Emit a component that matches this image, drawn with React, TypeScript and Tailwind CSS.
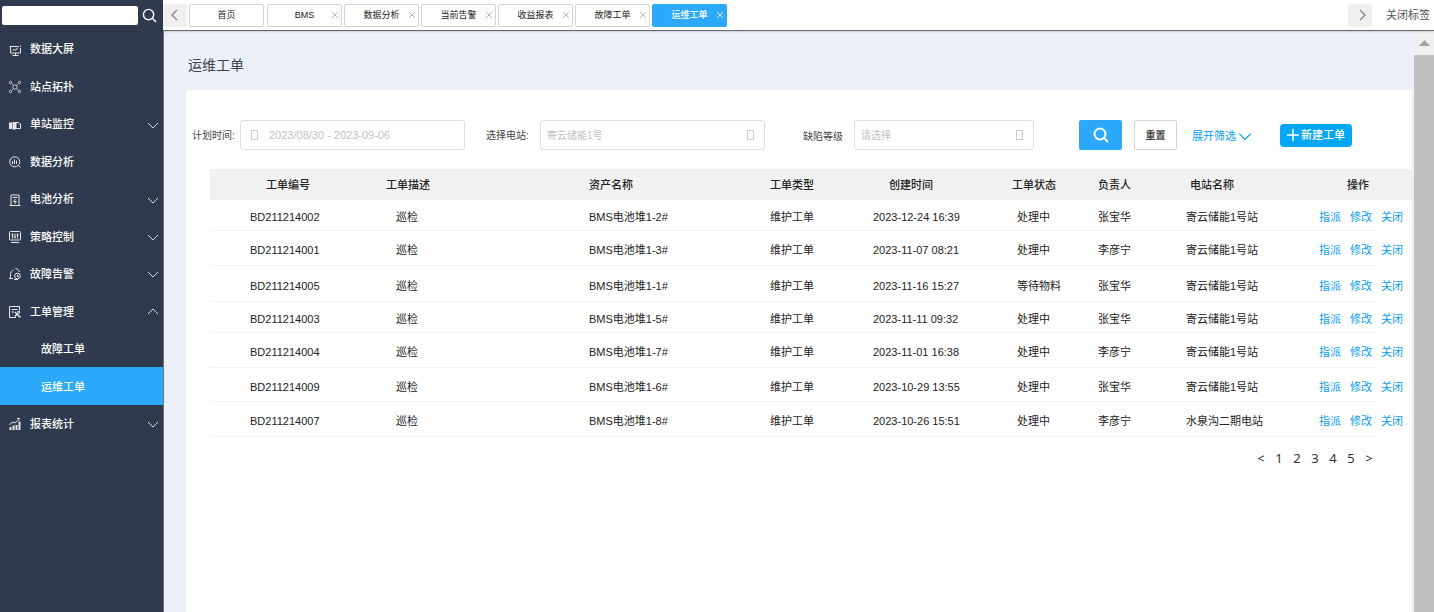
import { useState } from 'react';
import type { ReactNode } from 'react';
import clsx from 'clsx';

interface MenuItem {
  label: string;
  icon?: ReactNode;
  arrow?: 'up' | 'down';
  child?: boolean;
}

const menu: MenuItem[] = [
  {
    label: '数据大屏',
    icon: (
      <>
        <path d="M.5 2.500h9M11.500 4v5h-10v-6M11.500 1.500v1.500" />
        <path d="M3.500 11.500h6M6.500 9v2.500M3.500 7l2-2 1 1.500 2.500-3" />
      </>
    ),
  },
  {
    label: '站点拓扑',
    icon: (
      <g strokeWidth=".8">
        <circle cx="6" cy="6" r="2.200" />
        <circle cx="1.500" cy="1.500" r="1.200" />
        <circle cx="10.500" cy="1.500" r="1.200" />
        <circle cx="1.500" cy="10.500" r="1.200" />
        <circle cx="10.500" cy="10.500" r="1.200" />
        <path d="M2.500 2.500l2 2M9.500 2.500l-2 2M2.500 9.500l2-2M9.500 9.500l-2-2" />
      </g>
    ),
  },
  {
    label: '单站监控',
    arrow: 'down',
    icon: (
      <>
        <path d="M0 3.500h3v6.500H0zM3.500 3h3.500v7.500H3.500z" fill="currentColor" stroke="none" />
        <path d="M7 3.500h2.500l1 1.500h1v4.500H7z" />
      </>
    ),
  },
  {
    label: '数据分析',
    icon: (
      <>
        <circle cx="5.800" cy="5.800" r="5" />
        <path d="M3.500 5v3M5.500 3.500V8M7.500 4.500V8M9.500 9.500l2 2" />
      </>
    ),
  },
  {
    label: '电池分析',
    arrow: 'down',
    icon: (
      <>
        <path d="M2 11V1h8v10M.5 11.500h11M3.500 3.500h5" />
        <path d="M6.500 5L4.500 7.500h3L5.500 10" />
      </>
    ),
  },
  {
    label: '策略控制',
    arrow: 'down',
    icon: (
      <>
        <rect x=".5" y=".5" width="11" height="8.500" rx="1" />
        <path d="M3.500 2.500v5M6 2.500v5M8.500 2.500v5M2.500 4h2M5 6h2M7.500 4h2M2 11.500h8" />
      </>
    ),
  },
  {
    label: '故障告警',
    arrow: 'down',
    icon: (
      <>
        <path d="M0 10.500h4M1.500 10V6.500C1.500 4 3 2.500 4.500 2M6.500 .5c2 .5 3.500 1.500 4 3.500" />
        <circle cx="8.500" cy="8" r="2.800" />
        <path d="M8.500 6.500v2H10M5 11.500h4" />
      </>
    ),
  },
  {
    label: '工单管理',
    arrow: 'up',
    icon: (
      <>
        <path d="M5 11.500H.5V.5h10v4M2.500 3.500h6M2.500 6h2.500" />
        <path d="M6 6l5.500 5.500M6 10.500l3.500-4" strokeWidth="1.500" />
        <path d="M5 11.500h2M8.500 5.500h2v2" />
      </>
    ),
  },
  { label: '故障工单', child: true },
  { label: '运维工单', child: true },
  {
    label: '报表统计',
    arrow: 'down',
    icon: (
      <>
        <path d="M1.500 12V9M4.500 12V7.500M7.500 12V7M10.500 12V3.500" strokeWidth="2" />
        <path d="M.5 6.500L4 4l2 1 4.500-4M8 .5h3" />
      </>
    ),
  },
];

const tabs = ['首页', 'BMS', '数据分析', '当前告警', '收益报表', '故障工单', '运维工单'];

const orders = [
  { id: 'BD211214002', asset: 'BMS电池堆1-2#', time: '2023-12-24 16:39', status: '处理中', owner: '张宝华', station: '寄云储能1号站', height: 'h-[31px]' },
  { id: 'BD211214001', asset: 'BMS电池堆1-3#', time: '2023-11-07 08:21', status: '处理中', owner: '李彦宁', station: '寄云储能1号站', height: 'h-[35px]' },
  { id: 'BD211214005', asset: 'BMS电池堆1-1#', time: '2023-11-16 15:27', status: '等待物料', owner: '张宝华', station: '寄云储能1号站', height: 'h-[36px]' },
  { id: 'BD211214003', asset: 'BMS电池堆1-5#', time: '2023-11-11 09:32', status: '处理中', owner: '张宝华', station: '寄云储能1号站', height: 'h-[31px]' },
  { id: 'BD211214004', asset: 'BMS电池堆1-7#', time: '2023-11-01 16:38', status: '处理中', owner: '李彦宁', station: '寄云储能1号站', height: 'h-[35px]' },
  { id: 'BD211214009', asset: 'BMS电池堆1-6#', time: '2023-10-29 13:55', status: '处理中', owner: '张宝华', station: '寄云储能1号站', height: 'h-[34px]' },
  { id: 'BD211214007', asset: 'BMS电池堆1-8#', time: '2023-10-26 15:51', status: '处理中', owner: '李彦宁', station: '水泉沟二期电站', height: 'h-[35px]' },
];

const columns = [
  { title: '工单编号', className: 'w-[176px] pl-14' },
  { title: '工单描述', className: 'w-[203px]' },
  { title: '资产名称', className: 'w-[181px]' },
  { title: '工单类型', className: 'w-[103px]' },
  { title: '创建时间', className: 'w-[139px] pl-4' },
  { title: '工单状态', className: 'w-[86px]' },
  { title: '负责人', className: 'w-[88px]' },
  { title: '电站名称', className: 'w-[133px] pl-1' },
  { title: '操作', className: 'w-[93px] pl-7' },
];

interface ChevronProps {
  dir: 'up' | 'down' | 'left' | 'right';
  className?: string;
  strokeWidth?: number;
}

function Chevron({ dir, className, strokeWidth = 1 }: ChevronProps) {
  const d = {
    up: 'M1 8l5-5 5 5',
    down: 'M1 4l5 5 5-5',
    left: 'M8 1L3 6l5 5',
    right: 'M4 1l5 5-5 5',
  }[dir];
  return (
    <svg viewBox="0 0 12 12" className={className} fill="none" stroke="currentColor" strokeWidth={strokeWidth} aria-hidden="true">
      <path d={d} />
    </svg>
  );
}

function SearchIcon({ className, strokeWidth = 2 }: { className?: string; strokeWidth?: number }) {
  return (
    <svg viewBox="0 0 16 16" className={className} fill="none" stroke="currentColor" strokeWidth={strokeWidth} aria-hidden="true">
      <circle cx="7" cy="7" r="5.500" />
      <path d="M11 11l4 4" />
    </svg>
  );
}

function Sidebar() {
  const [active, setActive] = useState('运维工单');

  return (
    <aside className="w-[163px] shrink-0 bg-[#303a4e] text-white">
      <div className="flex h-[30px] items-center gap-1 pl-0.5">
        <input aria-label="搜索菜单" className="h-[19px] w-[136px] rounded-xs bg-white px-1 text-[11px] text-gray-800 outline-none" />
        <button aria-label="搜索">
          <SearchIcon className="h-[15px] w-[15px]" strokeWidth={1.5} />
        </button>
      </div>
      <ul className="flex h-[412px] flex-col">
        {menu.map((item) => (
          <li key={item.label} className="flex-1">
            <button
              onClick={() => setActive(item.label)}
              className={clsx(
                'flex h-full w-full items-center pt-0.5 pr-1 text-left text-[11px] font-medium',
                item.child ? 'pl-[41px]' : 'pl-[9px]',
                item.label === active && 'bg-[#2ca9fb]',
              )}
            >
              {item.icon && (
                <svg viewBox="0 0 12 12" className="mr-[9px] h-3 w-3 overflow-visible text-[#e3e6ea]" fill="none" stroke="currentColor" aria-hidden="true">
                  {item.icon}
                </svg>
              )}
              {item.label}
              {item.arrow && <Chevron dir={item.arrow} className="ml-auto h-3 w-3 text-[#d5d8dd]" />}
            </button>
          </li>
        ))}
      </ul>
    </aside>
  );
}

function TabBar() {
  const [current, setCurrent] = useState('运维工单');

  return (
    <header className="relative z-10 flex h-[31px] items-center border-b border-[#65656b] bg-white shadow">
      <button aria-label="向左" className="mr-0.5 flex h-[23px] w-6 items-center justify-center rounded-xs bg-[#f0f0f0] text-[#909090]">
        <Chevron dir="left" className="h-3 w-3" strokeWidth={1.5} />
      </button>
      <div className="flex gap-0.5">
        {tabs.map((tab, i) => (
          <div
            key={tab}
            className={clsx(
              'flex h-[23px] w-[75px] items-center rounded-xs border text-[9px] first:mr-px',
              tab === current ? 'border-[#2ca9fb] bg-[#2ca9fb] font-medium text-white' : 'border-[#d4d4d4] text-[#222]',
            )}
          >
            <button className="h-full flex-1 pt-0.5 text-center" onClick={() => setCurrent(tab)}>
              {tab}
            </button>
            {i > 0 && (
              <button aria-label={`关闭${tab}`} className={clsx('-ml-2.5 mr-0.5', tab === current ? 'text-[#d5eefe]' : 'text-[#b8b8b8]')}>
                <svg viewBox="0 0 8 8" className="h-2 w-2" fill="none" stroke="currentColor" aria-hidden="true">
                  <path d="M1 1l6 6M7 1L1 7" />
                </svg>
              </button>
            )}
          </div>
        ))}
      </div>
      <button aria-label="向右" className="ml-auto flex h-[23px] w-6 items-center justify-center rounded-xs bg-[#f0f0f0] pl-1 text-[#909090]">
        <Chevron dir="right" className="h-3 w-3" strokeWidth={1.5} />
      </button>
      <button className="mr-1 ml-3.5 text-[11px] text-[#555]">关闭标签</button>
    </header>
  );
}

function Box() {
  return <span className="h-2.5 w-[7px] shrink-0 border border-[#ccc]" />;
}

function Filters() {
  const field = 'flex h-[30px] items-center rounded-[3px] border border-[#dfdfdf] px-1.5';
  const input = 'min-w-0 flex-1 bg-transparent outline-none placeholder:text-[#bfbfbf]';

  return (
    <form className="flex items-center pl-1.5 text-[10px] text-[#444]" onSubmit={(e) => e.preventDefault()}>
      <label htmlFor="plan-time" className="w-[48px]">计划时间:</label>
      <div className={clsx(field, 'w-[225px] gap-[11px] pl-2.5')}>
        <Box />
        <input id="plan-time" placeholder="2023/08/30 - 2023-09-06" className={clsx(input, 'text-[11px]')} />
      </div>
      <label htmlFor="station" className="ml-[21px] w-[54px]">选择电站:</label>
      <div className={clsx(field, 'w-[225px] pr-2.5')}>
        <input id="station" placeholder="寄云储能1号" className={input} />
        <Box />
      </div>
      <label htmlFor="level" className="ml-[38px] w-[51px] pt-0.5">缺陷等级</label>
      <div className={clsx(field, 'w-[180px] pr-2.5')}>
        <input id="level" placeholder="请选择" className={input} />
        <Box />
      </div>
      <button aria-label="查询" className="ml-[45px] flex h-[30px] w-[43px] items-center justify-center rounded-xs bg-[#2ca9fb] text-white">
        <SearchIcon className="h-4 w-4" />
      </button>
      <button type="reset" className="ml-3 h-[30px] w-[43px] rounded-xs border border-[#d4d4d4] font-bold">重置</button>
      <button type="button" className="ml-[15px] flex items-center gap-0.5 pt-0.5 text-[11px] text-[#0a9df0]">
        展开筛选
        <Chevron dir="down" className="h-3.5 w-3.5" />
      </button>
      <button type="button" className="ml-7 flex h-[23px] w-[72px] items-center justify-center gap-0.5 rounded-[4px] bg-[#05a6f3] text-[11px] font-medium text-white">
        <svg viewBox="0 0 12 12" className="h-3 w-3" fill="none" stroke="currentColor" strokeWidth="1.500" aria-hidden="true">
          <path d="M6 0v12M0 6h12" />
        </svg>
        新建工单
      </button>
    </form>
  );
}

function OrderTable() {
  return (
    <table className="w-full table-fixed text-left text-[11px] whitespace-nowrap text-[#222]">
      <thead>
        <tr className="h-[31px] bg-[#f1f1f1]">
          {columns.map((col) => (
            <th key={col.title} className={clsx('pt-0.5 font-medium text-[#222]', col.className)}>
              {col.title}
            </th>
          ))}
        </tr>
      </thead>
      <tbody>
        {orders.map((order) => (
          <tr
            key={order.id}
            className={clsx('bg-[linear-gradient(#f3f3f3,#f3f3f3)] bg-[length:97%_1px] bg-[position:left_bottom] bg-no-repeat *:pt-1', order.height)}
          >
            <td className="pl-10">{order.id}</td>
            <td className="pl-2.5">巡检</td>
            <td>{order.asset}</td>
            <td>维护工单</td>
            <td>{order.time}</td>
            <td className="pl-[5px]">{order.status}</td>
            <td>{order.owner}</td>
            <td>{order.station}</td>
            <td>
              <div className="flex gap-[9px] text-[#0a9df0]">
                <a href="#assign">指派</a>
                <a href="#edit">修改</a>
                <a href="#close">关闭</a>
              </div>
            </td>
          </tr>
        ))}
      </tbody>
    </table>
  );
}

export default function App() {
  return (
    <div className="flex min-h-screen bg-white font-['Liberation_Sans','Noto_Sans_CJK_SC',sans-serif]">
      <Sidebar />
      <div className="flex min-w-0 flex-1 flex-col">
        <TabBar />
        <div className="flex flex-1">
          <main className="flex min-w-0 flex-1 flex-col border-l border-[#70737f] bg-[#ecf0f9] pl-[22px]">
            <h1 className="flex h-[59px] items-center pt-2.5 pl-0.5 text-[14px] text-[#3a4250]">运维工单</h1>
            <section className="flex-1 rounded-tl-xs bg-white pt-[30px]">
              <Filters />
              <div className="mt-[19px] pl-6">
                <OrderTable />
              </div>
              <nav aria-label="分页" className="mt-[11px] mr-[34px] flex justify-end font-['Noto_Sans',sans-serif] text-[13px] leading-5 text-[#333]">
                {['<', '1', '2', '3', '4', '5', '>'].map((p) => (
                  <button key={p} className="w-[18px]">
                    {p}
                  </button>
                ))}
              </nav>
            </section>
          </main>
          {/* scroll track */}
          <div className="flex w-[22px] shrink-0 flex-col bg-[#f0f0f0] pl-0.5">
            <div className="flex h-6 items-center justify-center">
              <svg viewBox="0 0 11 6" className="h-1.5 w-[11px] fill-[#a3a3a3]" aria-hidden="true">
                <path d="M0 6L5.500 0 11 6z" />
              </svg>
            </div>
            <div className="flex-1 bg-[#c1c1c1]" />
          </div>
        </div>
      </div>
    </div>
  );
}
